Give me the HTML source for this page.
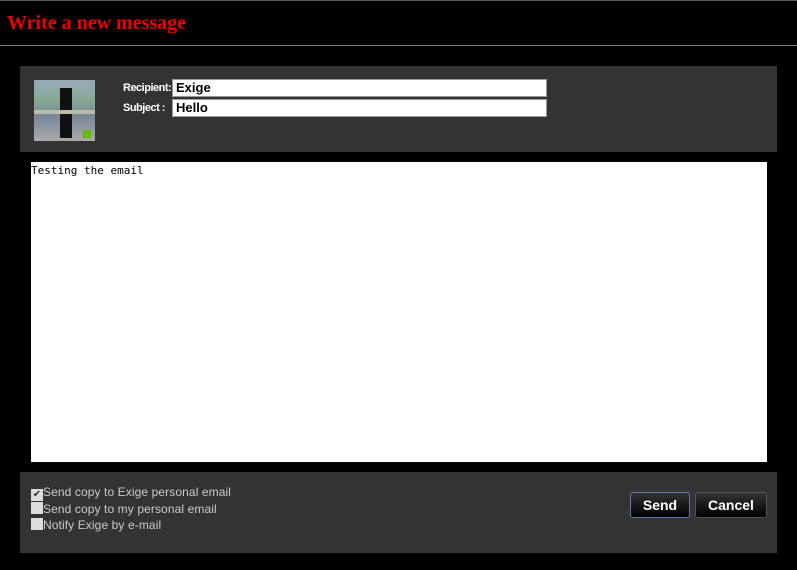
<!DOCTYPE html>
<html><head><style>
*{margin:0;padding:0;box-sizing:border-box}
body{width:797px;height:570px;background:#000;position:relative;overflow:hidden;font-family:"Liberation Sans",sans-serif}
.abs{position:absolute}
</style></head><body>
<div class="abs" style="left:0;top:0;width:797px;height:1px;background:#555"></div>
<div class="abs" style="left:7px;top:12px;font-family:'Liberation Serif',serif;font-weight:bold;font-size:20px;color:#e00">Write a new message</div>
<div class="abs" style="left:0;top:45px;width:797px;height:1px;background:#777"></div>
<div class="abs" style="left:20px;top:66px;width:757px;height:487px;background:#333"></div>
<div class="abs" style="left:34px;top:80px;width:61px;height:61px;background:linear-gradient(180deg,#9ab 0%,#8a9 30%,#789 60%,#aaa 100%)">
 <div class="abs" style="left:26px;top:8px;width:12px;height:50px;background:#111"></div>
 <div class="abs" style="left:0;top:30px;width:61px;height:4px;background:#bba"></div>
 <div class="abs" style="left:49px;top:50px;width:8px;height:8px;background:#6b0"></div>
</div>
<div class="abs" style="left:123px;top:82px;font-size:11px;font-weight:bold;color:#fff;letter-spacing:-0.5px">Recipient:</div>
<div class="abs" style="left:123px;top:102px;font-size:11px;font-weight:bold;color:#fff;letter-spacing:-0.5px">Subject :</div>
<div class="abs" style="left:172px;top:79px;width:375px;height:18px;background:#fff;border:1px solid #999;font-size:13px;padding-left:3px;line-height:16px;font-weight:bold">Exige</div>
<div class="abs" style="left:172px;top:99px;width:375px;height:18px;background:#fff;border:1px solid #999;font-size:13px;padding-left:3px;line-height:16px;font-weight:bold">Hello</div>
<div class="abs" style="left:20px;top:152px;width:757px;height:320px;background:#000"></div>
<div class="abs" style="left:31px;top:162px;width:736px;height:300px;background:#fff;font-family:'DejaVu Sans Mono',monospace;font-size:11px;padding:2px 0 0 0">Testing the email</div>
<div class="abs" style="left:31px;top:484px;font-size:12px;color:#ccc;line-height:16px;letter-spacing:0.1px">
<div><span style="display:inline-block;width:12px;height:12px;background:#ddd;vertical-align:-1px;font-size:10px;line-height:12px;color:#333;text-align:center">✔</span>Send copy to Exige personal email</div>
<div><span style="display:inline-block;width:12px;height:12px;background:#ddd;vertical-align:-1px"></span>Send copy to my personal email</div>
<div><span style="display:inline-block;width:12px;height:12px;background:#ddd;vertical-align:-1px"></span>Notify Exige by e-mail</div>
</div>
<div class="abs" style="left:630px;top:492px;width:60px;height:26px;border:1px solid #5a7aa8;border-radius:3px;background:linear-gradient(#333,#000);color:#fff;font-weight:bold;font-size:14px;text-align:center;line-height:24px">Send</div>
<div class="abs" style="left:695px;top:492px;width:72px;height:26px;border:1px solid #555;border-radius:3px;background:linear-gradient(#333,#000);color:#fff;font-weight:bold;font-size:14px;text-align:center;line-height:24px">Cancel</div>
</body></html>
